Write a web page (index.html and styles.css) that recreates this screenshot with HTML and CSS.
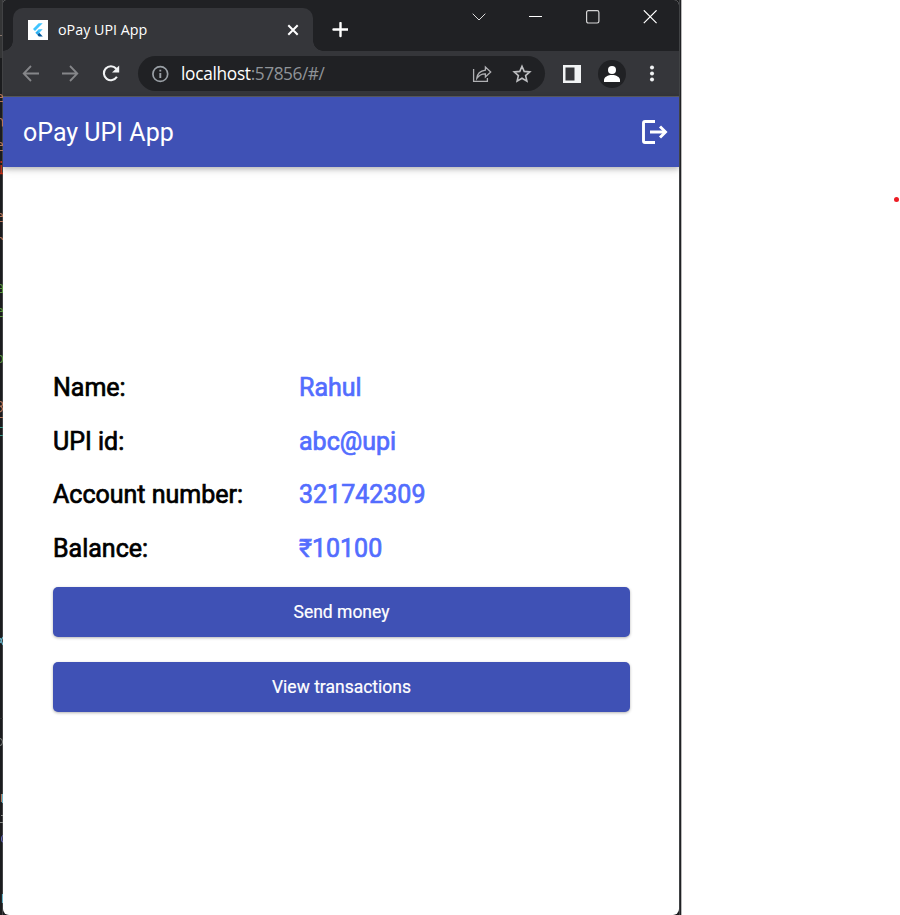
FILE: index.html
```html
<!DOCTYPE html>
<html lang="en">
<head>
<meta charset="utf-8">
<title>oPay UPI App</title>
<link rel="stylesheet" href="styles.css">
</head>
<body>
<div class="desktop">
  <svg class="editor-edge" width="3" height="915" viewBox="0 0 3 915" aria-hidden="true">
    <path fill="#343536" d="M0 0h3v58H0z"/>
    <path stroke="#414244" d="M2.500 0v915"/>
    <path stroke="#88766c" d="M0 35.500h2"/>
    <g fill="none" stroke="#b5765a" stroke-width="1.200">
      <path d="M0 94.500q2.500 0 2.500 3H0M0 101.500h3M0 118.500q2.500 0 2.500 3v5M0 142.500q2.500 0 2.500 3H0M0 150.500h3M0 213.500q2.500 0 2.500 3H0M0 221.500h3M0 237.500q2.500 0 2.500 2.500M0 401.500q2.500 0 2.500 2.500t-2.500 2q2.500 1 2.500 3t-2.500 3M0 417.500h3M1.500 794v8"/>
    </g>
    <path stroke="#c03018" stroke-width="1.500" d="M1.200 161v2M1.200 165v8M0 173.500h3"/>
    <path fill="none" stroke="#5a9440" stroke-width="1.200" d="M0 284.500q2.500 0 2.500 3v5H0M0 288.500h2M0 308.500q2.500 0 2.500 3H0M0 316.500h3M0 355.500q2.500 0 2.500 3.500t-2.500 3.500"/>
    <path stroke="#399584" d="M0 427.500h3M0 435.500h3"/>
    <path fill="none" stroke="#69b4c8" stroke-width="1.200" d="M3 637l-2 3.500 2 4.500M0 638l1.500 2.500L0 643M2.500 794v9M2.500 894v9"/>
    <path fill="none" stroke="#888c88" d="M0 738.500q2.500 0 2.500 3.500t-2.500 3.500M1 815.500h2M0 822.500h3"/>
    <path fill="none" stroke="#6c70c8" d="M3 835.500q-1.500 0-1.500 3.500t1.500 3"/>
    <path stroke="#303132" d="M0 718.500h3"/>
  </svg>
  <main class="window">
    <header class="tabstrip">
      <div class="tab">
        <svg class="favicon" width="20" height="20" viewBox="0 0 20 20" aria-hidden="true">
          <path fill="#fff" d="M0 0h20v20H0z"/>
          <path fill="#40c4ff" d="M10.700 3.200h4L7 11 5 9z"/>
          <path fill="#40c4ff" d="M10.700 9.300h4l-3.600 3.600-2-2z"/>
          <path fill="#29aef0" d="M7.300 12.800l2-2 2 2-2 2z"/>
          <path fill="#01579b" d="M9.300 14.800l2-2 3.500 3.700h-4z"/>
        </svg>
        <span class="tab-title">oPay UPI App</span>
        <svg class="tab-close" width="12" height="12" viewBox="0 0 12 12" aria-hidden="true"><path d="M1.300 1.300l9.400 9.400M10.700 1.300l-9.400 9.400" stroke="#fff" stroke-width="2"/></svg>
      </div>
      <svg class="new-tab" width="16" height="16" viewBox="0 0 16 16" aria-hidden="true"><path d="M8.500 1v13M1.500 7.500h14" stroke="#fff" stroke-width="2.400" stroke-linecap="round"/></svg>
      <div class="window-controls">
        <svg width="14" height="14" viewBox="0 0 14 14" aria-hidden="true"><path d="M.7 3.700L7 10l6.300-6.300" fill="none" stroke="#ddd"/></svg>
        <svg width="14" height="14" viewBox="0 0 14 14" aria-hidden="true"><path d="M0 6.500h13" stroke="#fff"/></svg>
        <svg width="14" height="14" viewBox="0 0 14 14" aria-hidden="true"><rect x=".6" y=".7" width="12.300" height="12.300" rx="1.700" fill="none" stroke="#d5d5d6" stroke-width="1.200"/></svg>
        <svg width="14" height="14" viewBox="0 0 14 14" aria-hidden="true"><path d="M.8.300l12.800 12.800M13.600.3L.8 13.100" stroke="#fff" stroke-width="1.200"/></svg>
      </div>
    </header>
    <nav class="toolbar">
      <svg class="nav-icon" width="18" height="18" viewBox="0 0 18 18" aria-hidden="true"><path d="M17 8.500H2M9 1L1.700 8.500 9 16" fill="none" stroke="#858689" stroke-width="1.800"/></svg>
      <svg class="nav-icon" width="18" height="18" viewBox="0 0 18 18" aria-hidden="true"><path d="M0 8.500h15M8 1l7.300 7.500L8 16" fill="none" stroke="#858689" stroke-width="1.800"/></svg>
      <svg class="nav-icon" width="20" height="20" viewBox="0 0 20 20" aria-hidden="true"><path d="M15.900 12.800a7 7 0 1 1-.8-8.300l2 2" fill="none" stroke="#f1f3f4" stroke-width="2.100"/><path d="M18.200 1.400v7.200H11z" fill="#f1f3f4"/></svg>
      <div class="omnibox">
        <svg width="18" height="18" viewBox="0 0 18 18" aria-hidden="true"><circle cx="9.300" cy="9" r="7.400" fill="none" stroke="#9aa0a6" stroke-width="1.700"/><path d="M9.300 8v5M9.300 4.700v1.900" stroke="#9aa0a6" stroke-width="1.900"/></svg>
        <span class="url"><span class="host">localhost</span>:57856/#/</span>
        <svg class="share" width="20" height="20" viewBox="0 0 20 20" aria-hidden="true"><path d="M1.600 5v12.400h13.800V14M4.800 14.300q.6-7 8.600-8.200V3l5.300 5-5.300 5v-3.200q-5.300-.2-8.600 4.500z" fill="none" stroke="#b0b1b4" stroke-width="1.300"/></svg>
        <svg class="star" width="20" height="20" viewBox="0 0 20 20" aria-hidden="true"><path d="M10 2.200l2.200 5.200 5.600.5-4.200 3.700 1.300 5.500-4.900-2.900-4.900 2.900 1.300-5.500-4.200-3.700 5.600-.5z" fill="none" stroke="#bdbec1" stroke-width="1.600"/></svg>
      </div>
      <svg class="side-panel" width="18" height="18" viewBox="0 0 18 18" aria-hidden="true"><path fill="#f1f3f4" fill-rule="evenodd" d="M0 0h18v18H0zM2.500 2.500v13h9v-13z"/></svg>
      <svg class="profile" width="28" height="28" viewBox="0 0 28 28" aria-hidden="true"><circle cx="14" cy="14" r="14" fill="#202124"/><circle cx="14" cy="10" r="4" fill="#fff"/><path d="M6 22v-2c0-3 4-5 8-5s8 2 8 5v2z" fill="#fff"/></svg>
      <svg class="more" width="6" height="18" viewBox="0 0 6 18" aria-hidden="true"><g fill="#f1f3f4"><circle cx="3" cy="2.500" r="2"/><circle cx="3" cy="8.500" r="2"/><circle cx="3" cy="14.500" r="2"/></g></svg>
    </nav>
    <section class="appbar">
      <h1>oPay UPI App</h1>
      <svg width="26" height="24" viewBox="0 0 26 24" aria-hidden="true"><path d="M13 1.500H3Q1.500 1.500 1.500 3v18q0 1.500 1.500 1.500h10M8 12h15" fill="none" stroke="#fff" stroke-width="2.900"/><path d="M18 6.500l5.500 5.500-5.500 5.500" fill="none" stroke="#fff" stroke-width="2.900"/></svg>
    </section>
    <section class="account">
      <dl class="details">
        <dt>Name:</dt><dd>Rahul</dd>
        <dt>UPI id:</dt><dd>abc@upi</dd>
        <dt>Account number:</dt><dd>321742309</dd>
        <dt>Balance:</dt><dd>₹10100</dd>
      </dl>
      <button type="button">Send money</button>
      <button type="button">View transactions</button>
    </section>
  </main>
  <div class="window-edge"></div>
  <div class="canvas"><span class="marker"></span></div>
</div>
</body>
</html>
```
FILE: styles.css
```css
* { box-sizing: border-box; }
body { margin: 0; background: #fff; font-family: Roboto, sans-serif; }
svg { display: block; flex: none; }
.desktop {
  display: grid;
  grid-template-columns: 3px 676px 2px 1fr;
  height: 915px;
  overflow: hidden;
  background: #1b1c1e;
}
.window {
  display: flex;
  flex-direction: column;
  height: 915px;
  background: #fff;
  border-radius: 3px 5px 6px 6px;
  overflow: hidden;
}
.window-edge { background: #202124; border-left: 1px solid #414345; }
.canvas { background: #fff; border-left: 1px solid #b9b9b9; }
.marker {
  display: block;
  width: 5px;
  height: 5px;
  margin: 197px 1px 0 auto;
  border-radius: 50%;
  background: #ed1c24;
}
.tabstrip {
  display: flex;
  height: 51px;
  background: #202124;
  flex: none;
}
.tab {
  position: relative;
  display: flex;
  align-items: center;
  width: 300px;
  height: 43px;
  margin: 8px 0 0 10px;
  padding: 0 14px 0 15px;
  border-radius: 10px 10px 0 0;
  background: #35363a;
}
.tab::before, .tab::after {
  content: "";
  position: absolute;
  bottom: 0;
  width: 10px;
  height: 10px;
}
.tab::before { left: -10px; background: radial-gradient(circle at 0 0, transparent 9.5px, #35363a 10px); }
.tab::after { right: -10px; background: radial-gradient(circle at 100% 0, transparent 9.5px, #35363a 10px); }
.tab-title {
  margin-left: 10px;
  font: 14.3px/20px "Open Sans", sans-serif;
  color: #fff;
  white-space: nowrap;
}
.tab-close { margin-left: auto; }
.new-tab { margin: 22px 0 0 19px; }
.window-controls {
  display: flex;
  gap: 43px;
  margin: 10px 22px 0 auto;
}
.toolbar {
  display: flex;
  align-items: center;
  height: 46px;
  flex: none;
  padding-left: 19px;
  background: #35363a;
  border-bottom: 1px solid #5b5c5f;
}
.nav-icon { margin-right: 22px; }
.nav-icon:nth-child(3) { margin: 0 17px 0 -1px; }
.omnibox {
  display: flex;
  align-items: center;
  width: 407px;
  height: 35px;
  padding: 0 13px;
  border-radius: 18px;
  background: #202124;
}
.url {
  margin-left: 12px;
  font: 17.3px/24px "Open Sans", sans-serif;
  letter-spacing: -0.45px;
  color: #8f9398;
  white-space: nowrap;
}
.host { color: #fff; letter-spacing: -0.3px; }
.share { margin-left: auto; }
.star { margin-left: 20px; }
.side-panel { margin-left: 18px; }
.profile { margin-left: 17px; }
.more { margin-left: 23px; }
.appbar {
  position: relative;
  display: flex;
  align-items: center;
  justify-content: space-between;
  height: 70px;
  flex: none;
  padding: 0 11px 0 20px;
  background: #3f51b5;
  box-shadow: 0 2px 5px rgba(0, 0, 0, .24), 0 4px 10px rgba(0, 0, 0, .08);
}
.appbar h1 {
  margin: 2px 0 0;
  font-size: 25px;
  line-height: 30px;
  font-weight: 400;
  color: #fff;
}
.account {
  display: flex;
  flex-direction: column;
  gap: 25px;
  padding: 194.3px 49px 0 50px;
}
.details {
  display: grid;
  grid-template-columns: 246px 1fr;
  grid-auto-rows: 53.6px;
  align-items: center;
  height: 200.7px;
  margin: 0;
  font-size: 25px;
  line-height: 30px;
  color: #000;
  -webkit-text-stroke: 0.7px currentColor;
}
.details dd { margin: 0; color: #536dfe; }
.account button {
  height: 50px;
  padding: 0;
  border: 0;
  border-radius: 5px;
  background: #3f51b5;
  box-shadow: 0 1px 3px rgba(0, 0, 0, .3);
  color: #fff;
  font: 400 17.5px/24px Roboto, sans-serif;
  -webkit-text-stroke: 0.2px currentColor;
}
```
